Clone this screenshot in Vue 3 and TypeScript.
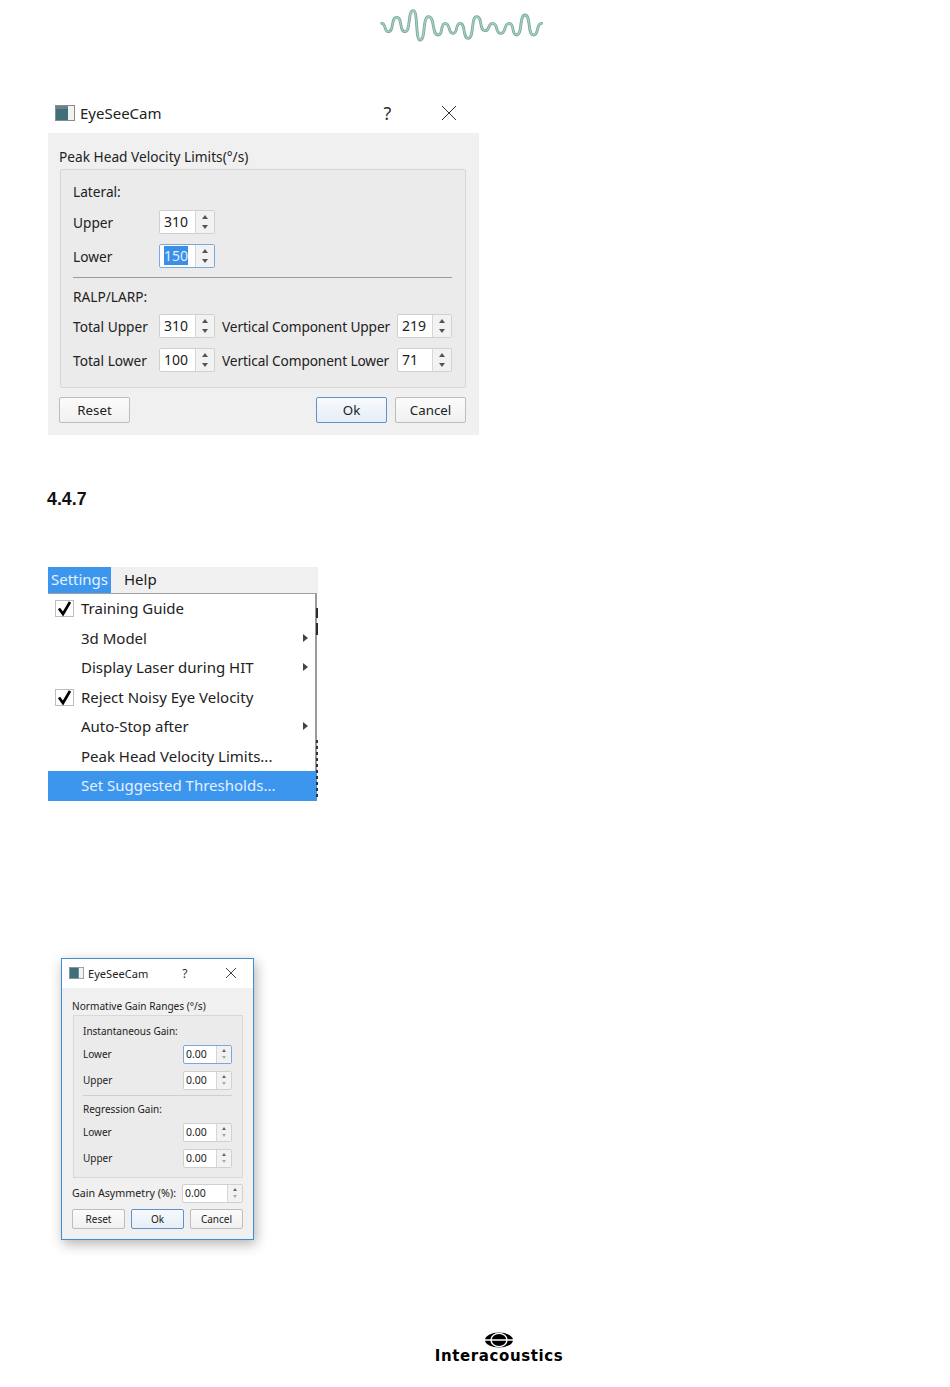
<script setup lang="ts">
const waveExt: [number, number][] = [[35,70],[55,95],[80,52],[105,95],[130,32],[150,120],[175,50],[205,105],[225,70],[250,100],[270,70],[295,115],[320,50],[345,92],[368,70],[392,100],[418,70],[440,105],[465,45],[490,105],[515,70]]
const wavePath = waveExt.reduce((d, p, i) => {
  if (i === 0) return `M${p[0]} ${p[1]}`
  const q = waveExt[i - 1]
  const k = (p[0] - q[0]) * 0.72
  return `${d} C${q[0] + k} ${q[1]} ${p[0] - k} ${p[1]} ${p[0]} ${p[1]}`
}, '')

const menuRows = [
  { t: 'Training Guide', check: true },
  { t: '3d Model', arrow: true },
  { t: 'Display Laser during HIT', arrow: true },
  { t: 'Reject Noisy Eye Velocity', check: true },
  { t: 'Auto-Stop after', arrow: true },
  { t: 'Peak Head Velocity Limits...' },
  { t: 'Set Suggested Thresholds...', active: true },
]
</script>

<template>
  <div class="page">
    <svg class="wave" viewBox="0 0 570 150" width="190" height="50">
      <path :d="wavePath" fill="none" stroke="#7ba69f" stroke-width="8.5" stroke-linecap="round" />
      <path :d="wavePath" fill="none" stroke="#a6d2c2" stroke-width="3.5" stroke-linecap="round" />
    </svg>

    <section class="d1">
      <header class="d1-title">
        <svg class="win-ico" viewBox="0 0 20 16" width="20" height="16">
          <rect x="0.5" y="0.5" width="19" height="15" fill="#f2f2f2" stroke="#8a8a8a" />
          <rect x="1" y="1" width="12" height="14" fill="#3f6f78" />
          <rect x="1" y="1" width="12" height="3" fill="#6d7f8a" />
        </svg>
        <span class="d1-name">EyeSeeCam</span>
        <span class="d1-q">?</span>
        <svg class="d1-x" viewBox="0 0 16 16" width="16" height="16">
          <path d="M1 1L15 15M15 1L1 15" stroke="#333" stroke-width="1" fill="none" />
        </svg>
      </header>
      <div class="d1-body">
        <div class="d1-cap">Peak Head Velocity Limits(°/s)</div>
        <div class="d1-group">
          <div class="d1-line">Lateral:</div>
          <div class="d1-row r1">
            <span class="d1-lab">Upper</span>
            <div class="spin"><span class="val">310</span><span class="btns"><i class="up"></i><i class="dn"></i></span></div>
          </div>
          <div class="d1-row r2">
            <span class="d1-lab">Lower</span>
            <div class="spin focus"><span class="val"><b class="sel">150</b></span><span class="btns"><i class="up"></i><i class="dn"></i></span></div>
          </div>
          <div class="d1-rule"></div>
          <div class="d1-line l2">RALP/LARP:</div>
          <div class="d1-row r3">
            <span class="d1-lab">Total Upper</span>
            <div class="spin"><span class="val">310</span><span class="btns"><i class="up"></i><i class="dn"></i></span></div>
            <span class="d1-lab2">Vertical Component Upper</span>
            <div class="spin sm"><span class="val">219</span><span class="btns"><i class="up"></i><i class="dn"></i></span></div>
          </div>
          <div class="d1-row r2">
            <span class="d1-lab">Total Lower</span>
            <div class="spin"><span class="val">100</span><span class="btns"><i class="up"></i><i class="dn"></i></span></div>
            <span class="d1-lab2">Vertical Component Lower</span>
            <div class="spin sm"><span class="val">71</span><span class="btns"><i class="up"></i><i class="dn"></i></span></div>
          </div>
        </div>
        <div class="d1-btns">
          <button class="btn">Reset</button>
          <span class="grow"></span>
          <button class="btn def">Ok</button>
          <button class="btn">Cancel</button>
        </div>
      </div>
    </section>

    <h2 class="head">4.4.7</h2>

    <section class="menu">
      <div class="bar"><span class="bar-on">Settings</span><span class="bar-off">Help</span></div>
      <div class="panel">
        <div v-for="r in menuRows" :key="r.t" class="mrow" :class="{ active: r.active }">
          <span v-if="r.check" class="cb">
            <svg viewBox="0 0 19 17" width="19" height="17"><path d="M4 8.5L8 14L15 2" fill="none" stroke="#000" stroke-width="2.7" /></svg>
          </span>
          <span class="mtext">{{ r.t }}</span>
          <i v-if="r.arrow" class="arrow"></i>
        </div>
      </div>
      <span class="frag f1"></span>
      <span class="frag f2"></span>
      <span class="frag f3"></span>
    </section>

    <section class="d2">
      <header class="d2-title">
        <svg class="win-ico" viewBox="0 0 20 16" width="15" height="12">
          <rect x="0.5" y="0.5" width="19" height="15" fill="#f2f2f2" stroke="#8a8a8a" />
          <rect x="1" y="1" width="12" height="14" fill="#3f6f78" />
        </svg>
        <span class="d2-name">EyeSeeCam</span>
        <span class="d2-q">?</span>
        <svg class="d2-x" viewBox="0 0 12 12" width="12" height="12">
          <path d="M1 1L11 11M11 1L1 11" stroke="#444" stroke-width="1" fill="none" />
        </svg>
      </header>
      <div class="d2-body">
        <div class="d2-cap">Normative Gain Ranges (°/s)</div>
        <div class="d2-group">
          <div class="d2-line">Instantaneous Gain:</div>
          <div class="d2-row first"><span>Lower</span><div class="spin s2 f2b"><span class="val">0.00</span><span class="btns"><i class="up"></i><i class="dn"></i></span></div></div>
          <div class="d2-row"><span>Upper</span><div class="spin s2"><span class="val">0.00</span><span class="btns"><i class="up"></i><i class="dn"></i></span></div></div>
          <div class="d2-rule"></div>
          <div class="d2-line l2">Regression Gain:</div>
          <div class="d2-row first"><span>Lower</span><div class="spin s2"><span class="val">0.00</span><span class="btns"><i class="up"></i><i class="dn"></i></span></div></div>
          <div class="d2-row"><span>Upper</span><div class="spin s2"><span class="val">0.00</span><span class="btns"><i class="up"></i><i class="dn"></i></span></div></div>
        </div>
        <div class="d2-asym">
          <span>Gain Asymmetry (%):</span>
          <div class="spin s2 wide"><span class="val">0.00</span><span class="btns"><i class="up"></i><i class="dn"></i></span></div>
        </div>
        <div class="d2-btns">
          <button class="btn b2">Reset</button>
          <button class="btn b2 def">Ok</button>
          <button class="btn b2">Cancel</button>
        </div>
      </div>
    </section>

    <footer class="brand">
      <svg viewBox="0 0 28 16" width="28" height="16">
        <ellipse cx="14" cy="8" rx="14" ry="7.5" fill="#000" />
        <path d="M0 8H28" stroke="#fff" stroke-width="1.5" />
        <ellipse cx="14" cy="8" rx="8" ry="6.6" fill="none" stroke="#fff" stroke-width="1.4" />
      </svg>
      <span class="brand-name">Interacoustics</span>
    </footer>
  </div>
</template>

<style>
html, body { margin: 0; background: #fff; }
</style>

<style scoped>
.page {
  width: 950px;
  height: 1387px;
  overflow: hidden;
  display: flex;
  flex-direction: column;
  align-items: flex-start;
  background: #fff;
  color: #222;
  font-family: "Noto Sans", "Liberation Sans", sans-serif;
}
.wave { display: block; margin-left: 370px; flex: none; }

/* spin box */
.spin {
  box-sizing: border-box;
  width: 56px;
  height: 24px;
  display: flex;
  background: #fff;
  border: 1px solid #d0d0d0;
  border-radius: 2px;
  flex: none;
}
.spin.sm { width: 55px; }
.val {
  flex: 1;
  border-right: 1px solid #d6d6d6;
  font-size: 14px;
  line-height: 22px;
  padding-left: 4px;
}
.sel { font-weight: 400; background: #3c8fe6; color: #dfeeff; }
.btns {
  width: 18px;
  background: #f2f2f2;
  display: flex;
  flex-direction: column;
  align-items: center;
  justify-content: center;
  gap: 6px;
}
.up, .dn { width: 0; height: 0; border-left: 3.5px solid transparent; border-right: 3.5px solid transparent; }
.up { border-bottom: 4px solid #555; }
.dn { border-top: 4px solid #555; }
.focus { border-color: #7aa7dc; }

/* dialog 1 */
.d1 { margin: 47px 0 0 48px; width: 431px; flex: none; }
.d1-title { box-sizing: border-box; height: 36px; padding-bottom: 4px; display: flex; align-items: center; }
.d1 .win-ico { margin-left: 7px; }
.d1-name { margin-left: 5px; font-size: 15px; }
.d1-q { margin-left: 222px; font-size: 18px; color: #333; }
.d1-x { margin-left: 50px; }
.d1-body {
  box-sizing: border-box;
  height: 302px;
  background: #f0f0f0;
  padding: 14px 13px 0 11px;
  font-size: 13.7px;
}
.d1-cap { height: 20px; line-height: 20px; margin-bottom: 2px; }
.d1-group {
  box-sizing: border-box;
  margin-left: 1px;
  width: 406px;
  height: 219px;
  background: #ebebeb;
  border: 1px solid #d6d6d6;
  border-radius: 2px;
  padding: 12px 13px 0 12px;
}
.d1-line { height: 20px; line-height: 20px; }
.d1-line.l2 { margin-top: 9px; }
.d1-row { display: flex; align-items: center; }
.r1 { margin-top: 8px; }
.r2 { margin-top: 10px; }
.r3 { margin-top: 7px; }
.d1-lab { width: 86px; flex: none; }
.d1-lab2 { width: 175px; margin-left: 7px; flex: none; white-space: nowrap; letter-spacing: -0.12px; }
.d1-rule { height: 1px; background: #9a9a9a; margin: 9px 0 0 0; }
.d1-btns { display: flex; margin-top: 9px; gap: 8px; }
.grow { flex: 1; }
.btn {
  box-sizing: border-box;
  width: 71px;
  height: 26px;
  padding: 0;
  background: linear-gradient(#fbfbfb, #f1f1f1);
  border: 1px solid #bdbdbd;
  border-radius: 2px;
  font: inherit;
  font-size: 13.3px;
  color: #222;
}
.def { border-color: #5e92cf; background: linear-gradient(#f7fafd, #e6eef7); }

.head {
  margin: 55px 0 0 47px;
  font: bold 17.8px/18px "Liberation Sans", Arial, sans-serif;
  color: #111;
  flex: none;
}

/* menu */
.menu { position: relative; margin-top: 59px; margin-left: 48px; width: 270px; flex: none; }
.bar { height: 26px; background: #f0f0f0; display: flex; font-size: 15px; line-height: 25px; }
.bar-on { width: 63px; background: #3d96ee; color: #e6f2ff; text-align: center; }
.bar-off { margin-left: 13px; color: #1a1a1a; }
.panel {
  box-sizing: border-box;
  width: 269px;
  background: #fff;
  border-top: 1px solid #a0a0a0;
  border-right: 2px solid #9a9a9a;
  font-size: 15px;
}
.mrow { box-sizing: border-box; position: relative; height: 29.5px; display: flex; align-items: center; padding: 0 0 1px 33px; }
.mrow.active { background: #3d96ee; color: #e3f0ff; width: 269px; }
.cb {
  position: absolute;
  left: 7px;
  top: 6px;
  box-sizing: border-box;
  width: 19px;
  height: 17px;
  border: 1px solid #bdbdbd;
  display: flex;
}
.cb svg { margin: -1px; flex: none; }
.arrow {
  position: absolute;
  left: 255px;
  top: 10px;
  width: 0;
  height: 0;
  border-top: 4px solid transparent;
  border-bottom: 4px solid transparent;
  border-left: 5px solid #444;
}
.frag { position: absolute; left: 268px; width: 2px; background: #2b2b2b; }
.f1 { top: 41px; height: 10px; }
.f2 { top: 56px; height: 12px; }
.f3 {
  top: 173px;
  height: 60px;
  background: repeating-linear-gradient(#333 0 3px, transparent 3px 6px);
}

/* dialog 2 */
.d2 {
  box-sizing: border-box;
  margin: 157px 0 0 61px;
  width: 193px;
  height: 282px;
  border: 1px solid #3d8fd0;
  box-shadow: 2px 4px 12px rgba(0,0,0,.3);
  background: #f0f0f0;
  flex: none;
  font-size: 10px;
}
.d2-title { height: 29px; background: #fff; display: flex; align-items: center; }
.d2 .win-ico { margin-left: 7px; }
.d2-name { margin-left: 4px; font-size: 11.1px; }
.d2-q { margin-left: 34px; font-size: 12px; color: #333; }
.d2-x { margin-left: 37px; }
.d2-body { padding: 10px 10px 0 10px; }
.d2-cap { height: 16px; line-height: 16px; margin-bottom: 1px; font-size: 10.1px; }
.d2-group {
  box-sizing: border-box;
  margin-left: 1px;
  width: 170px;
  height: 163px;
  background: #ebebeb;
  border: 1px solid #d8d8d8;
  padding: 8px 10px 0 9px;
}
.d2-line { height: 14px; line-height: 14px; }
.d2-line.l2 { margin-top: 6px; }
.d2-row { display: flex; align-items: center; justify-content: space-between; margin-top: 7px; }
.d2-row.first { margin-top: 7px; }
.d2-rule { height: 1px; background: #cfcfcf; margin-top: 5px; }
.s2 { width: 49px; height: 19px; }
.s2 .val { font-size: 10.5px; line-height: 17px; padding-left: 2px; }
.s2 .btns { width: 14px; gap: 4px; }
.s2 .up, .s2 .dn { border-left-width: 2.5px; border-right-width: 2.5px; }
.s2 .up { border-bottom: 3px solid #666; }
.s2 .dn { border-top: 3px solid #aaa; }
.f2b { border-color: #7aa7dc; }
.wide { width: 61px; }
.d2-asym { display: flex; align-items: center; justify-content: space-between; margin-top: 6px; font-size: 10.7px; }
.d2-btns { display: flex; justify-content: space-between; margin-top: 6px; }
.b2 { width: 53px; height: 20px; font-size: 10px; line-height: 16px; }

/* brand */
.brand {
  margin: 92px 0 0 435px;
  width: 128px;
  display: flex;
  flex-direction: column;
  align-items: center;
  flex: none;
}
.brand-name {
  font: 700 15px/14px "DejaVu Sans", sans-serif;
  letter-spacing: 0.6px;
  color: #000;
  white-space: nowrap;
  margin-top: 1px;
}
</style>
